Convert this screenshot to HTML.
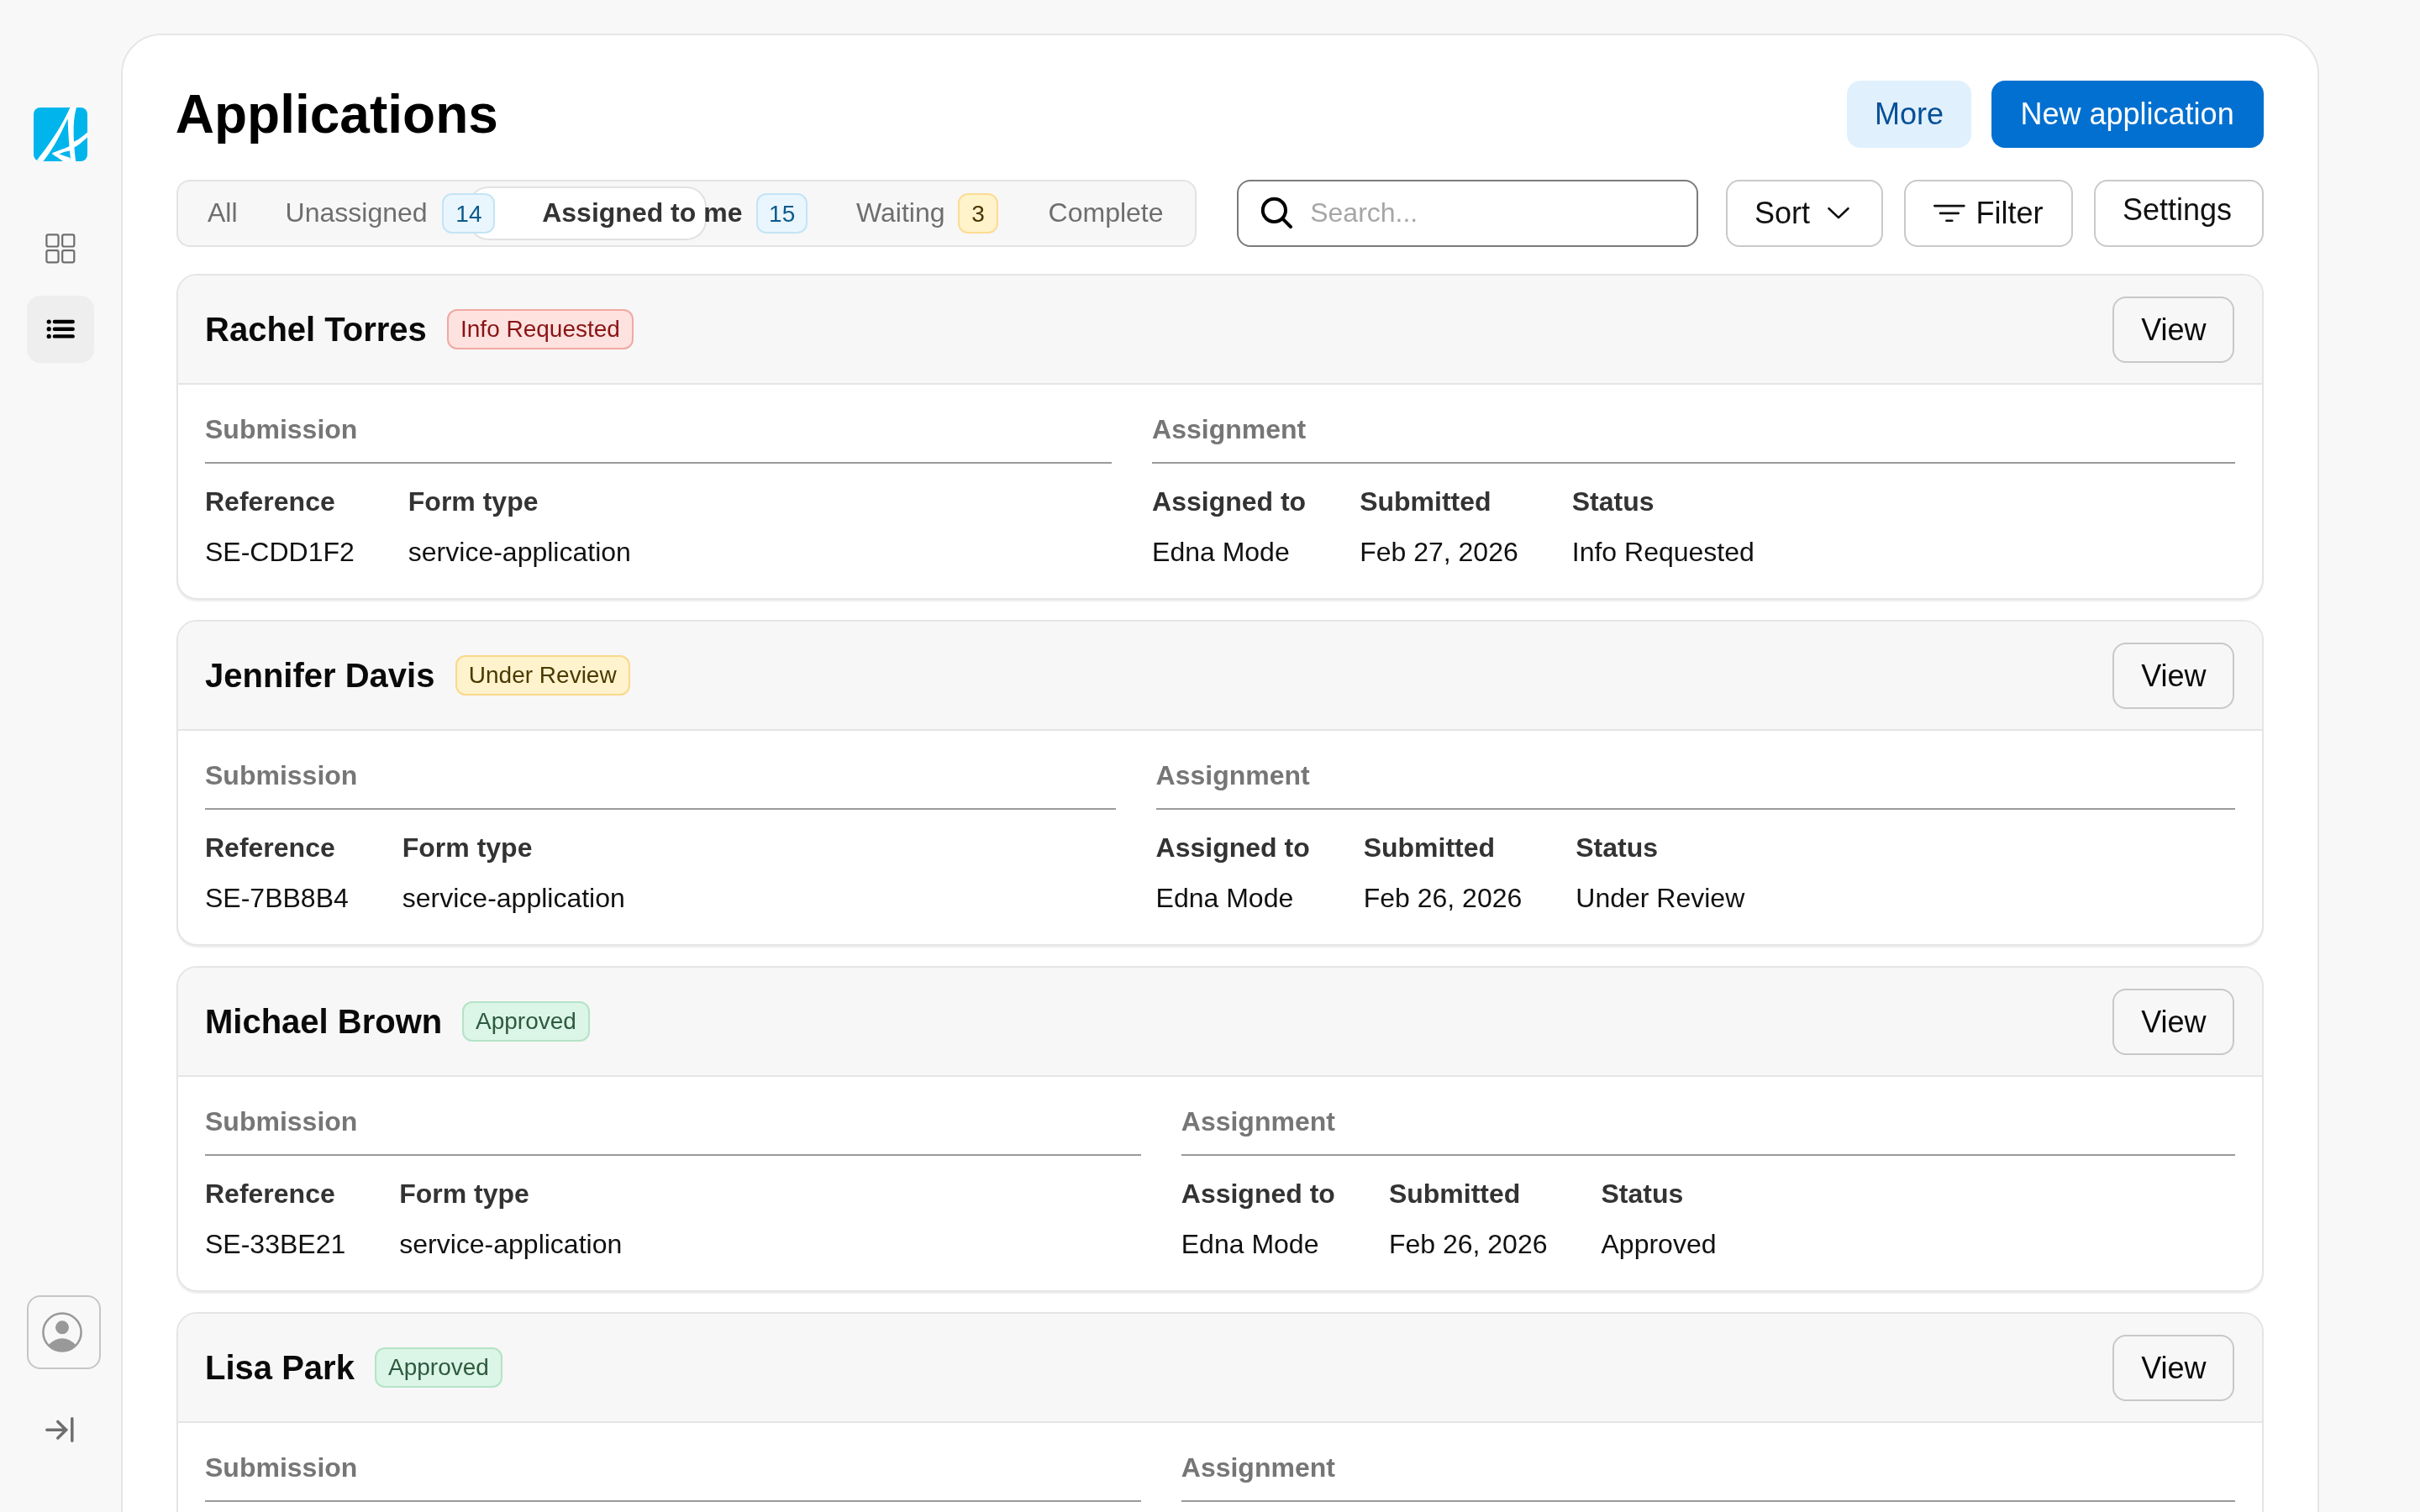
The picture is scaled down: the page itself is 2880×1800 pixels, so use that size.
<!DOCTYPE html>
<html><head><meta charset="utf-8">
<style>
html,body{margin:0;padding:0;}
body{width:2880px;height:1800px;overflow:hidden;background:#f8f8f8;font-family:"Liberation Sans",sans-serif;}
#z{zoom:2;will-change:transform;width:1440px;height:900px;position:relative;overflow:hidden;background:#f8f8f8;}
.a{position:absolute;white-space:nowrap;}
.panel{position:absolute;left:72px;top:20px;width:1308px;height:1200px;box-sizing:border-box;border:1px solid #e6e6e6;border-radius:24px;background:#fff;}
.title{left:104.4px;top:48px;font-size:32px;line-height:40px;font-weight:bold;color:#000;}
.btn{position:absolute;box-sizing:border-box;border-radius:8px;text-align:center;white-space:nowrap;font-size:18px;}
.more{left:1099px;top:48px;width:74px;height:40px;line-height:40px;background:#e0f0fd;color:#054f96;}
.new{left:1184.8px;top:48px;width:162px;height:40px;line-height:40px;background:#0270d0;color:#fff;}
.tabs{position:absolute;left:105px;top:107px;width:607px;height:39.75px;box-sizing:border-box;border:1px solid #e3e3e3;border-radius:8px;background:#f7f7f7;}
.pill{position:absolute;left:278.4px;top:110.95px;width:142.2px;height:31.85px;box-sizing:border-box;border:1px solid #e2e2e2;border-radius:12px;background:#fff;}
.tab{position:absolute;top:116.6px;font-size:16px;line-height:20px;color:#6e6e6e;}
.tab.act{color:#333;font-weight:bold;}
.bdg{position:absolute;top:115.1px;height:23.75px;box-sizing:border-box;border:1px solid #c4e4f5;background:#eaf6fd;color:#0b5a8c;border-radius:6px;font-size:14px;line-height:22.5px;text-align:center;}
.bdg.y{border-color:#fcdc94;background:#fef3cb;color:#4a3500;}
.search{position:absolute;left:735.8px;top:107.1px;width:274.9px;height:39.7px;box-sizing:border-box;border:1px solid #7a7a7a;border-radius:8px;background:#fff;}
.ob{position:absolute;top:107.1px;height:39.9px;box-sizing:border-box;border:1px solid #c9c9c9;border-radius:8px;background:#fff;}
.card{position:absolute;left:105px;width:1242px;height:194px;box-sizing:border-box;border:1px solid #e5e5e5;border-radius:12px;background:#fff;box-shadow:0 1px 1px rgba(0,0,0,0.07);overflow:hidden;}
.ch{position:absolute;left:0;top:0;right:0;height:65px;box-sizing:border-box;border-bottom:1px solid #e5e5e5;background:#f7f7f7;}
.name{position:absolute;left:16px;top:22.2px;font-size:20px;line-height:20px;font-weight:bold;color:#0a0a0a;white-space:nowrap;}
.cb{position:absolute;top:20px;height:24px;box-sizing:border-box;border:1px solid;border-radius:6px;font-size:14px;line-height:22px;padding:0 7px;white-space:nowrap;}
.red{background:#fde2e0;border-color:#f0a9a2;color:#8a1414;}
.yel{background:#fef3cc;border-color:#fad88c;color:#4a3a00;}
.grn{background:#dbf5e6;border-color:#b5e3c7;color:#2d5a3e;}
.view{position:absolute;left:1151.2px;top:12.25px;width:72.5px;height:39.5px;box-sizing:border-box;border:1px solid #c8c8c8;border-radius:8px;font-size:18px;line-height:37.5px;text-align:center;color:#0a0a0a;}
.body{position:absolute;left:16px;top:65px;width:1208px;display:flex;gap:24px;}
.sec{flex:1 1 auto;}
.st{font-size:16px;line-height:20px;font-weight:bold;color:#767676;margin-top:16.5px;height:20px;}
.dv{margin-top:9.3px;border-top:1px solid #9a9a9a;height:0;}
.cols{display:flex;gap:32px;margin-top:12.8px;}
.lb{font-size:16px;line-height:20px;font-weight:bold;color:#333;white-space:nowrap;}
.vl{font-size:16px;line-height:20px;color:#111;white-space:nowrap;margin-top:9.7px;}
</style></head>
<body><div id="z">
<!-- sidebar -->
<svg class="a" style="left:20px;top:64px" width="32" height="32" viewBox="0 0 64 64">
<defs><clipPath id="lc"><rect x="0" y="0" width="64" height="64" rx="8"/></clipPath></defs>
<rect x="0" y="0" width="64" height="64" rx="8" fill="#00b5ec"/>
<g clip-path="url(#lc)" fill="#fff">
<path d="M3,64 C12,52 30,30 43.4,0 L51,0 C47,14 46.5,32 50.2,64 L44.2,64 C42.5,48 41,30 40.6,13.2 C33,30 24,48 11.4,64 Z"/>
<path d="M64,29.5 C58,35 52,39 47.8,40.8 L41.8,46.4 C35,49.5 28,51.5 21.8,54.3 C23,57 30,60 35,64 L44,64 L43.5,60 C38,58 34,56.5 30.2,55.5 C34,53.5 38,52.5 42.2,51.8 L48.2,47.6 C53,45 58,41 64,35.5 Z"/>
</g></svg>
<svg class="a" style="left:27px;top:139px" width="18" height="18" viewBox="0 0 18 18" fill="none" stroke="#6e6e6e" stroke-width="1.1">
<rect x="0.7" y="0.7" width="7.05" height="7.05" rx="1"/><rect x="10.1" y="0.7" width="7.05" height="7.05" rx="1"/>
<rect x="0.7" y="10.1" width="7.05" height="7.05" rx="1"/><rect x="10.1" y="10.1" width="7.05" height="7.05" rx="1"/>
</svg>
<div class="a" style="left:16px;top:176px;width:40px;height:40px;border-radius:8px;background:#efeeef"></div>
<svg class="a" style="left:27px;top:187px" width="18" height="18" viewBox="0 0 18 18" fill="#000" stroke="#000" stroke-linecap="round">
<circle cx="2.1" cy="4.5" r="1.3" stroke="none"/><circle cx="2.1" cy="8.85" r="1.3" stroke="none"/><circle cx="2.1" cy="13.2" r="1.3" stroke="none"/>
<path d="M5.45,4.5H16.35M5.45,8.85H16.35M5.45,13.2H16.35" stroke-width="2.2" fill="none"/>
</svg>
<div class="a" style="left:16px;top:771px;width:44px;height:44px;box-sizing:border-box;border:1px solid #c6c6c6;border-radius:8px;"></div>
<svg class="a" style="left:23px;top:779px" width="28" height="28" viewBox="0 0 28 28">
<defs><clipPath id="uc"><circle cx="14" cy="14" r="11.5"/></clipPath></defs>
<circle cx="14" cy="14" r="11.3" fill="none" stroke="#999" stroke-width="1.25"/>
<circle cx="14" cy="11.15" r="4" fill="#999"/>
<g clip-path="url(#uc)"><ellipse cx="14" cy="30.25" rx="11" ry="12.65" fill="#999"/></g>
</svg>
<svg class="a" style="left:26px;top:842px" width="20" height="18" viewBox="0 0 20 18" fill="none" stroke="#6e6e6e" stroke-width="1.75" stroke-linecap="round" stroke-linejoin="round">
<path d="M1.9,9.1H13.5M8.4,4.2L13.3,9.1L8.4,14M16.9,2.4V15.6"/>
</svg>

<div class="panel"></div>
<div class="a title">Applications</div>
<div class="btn more">More</div>
<div class="btn new">New application</div>

<div class="tabs"></div>
<div class="pill"></div>
<div class="tab" style="left:123.5px">All</div>
<div class="tab" style="left:169.8px">Unassigned</div>
<div class="bdg" style="left:263.2px;width:31.5px">14</div>
<div class="tab act" style="left:322.6px">Assigned to me</div>
<div class="bdg" style="left:450.1px;width:30.5px">15</div>
<div class="tab" style="left:509.5px">Waiting</div>
<div class="bdg y" style="left:570px;width:24px">3</div>
<div class="tab" style="left:623.8px">Complete</div>

<div class="search"></div>
<svg class="a" style="left:750px;top:117px" width="20" height="20" viewBox="0 0 20 20" fill="none" stroke="#000" stroke-width="2" stroke-linecap="round">
<circle cx="8.2" cy="8.2" r="6.8"/><path d="M13.2,13.2L18,18"/>
</svg>
<div class="a" style="left:779.6px;top:116.7px;font-size:16px;line-height:20px;color:#a6a6a6">Search...</div>

<div class="ob" style="left:1027.2px;width:93.4px"></div>
<div class="a" style="left:1044px;top:117px;font-size:18px;line-height:20px;color:#111">Sort</div>
<svg class="a" style="left:1084px;top:122px" width="18" height="10" viewBox="0 0 18 10" fill="none" stroke="#111" stroke-width="1.3" stroke-linecap="round" stroke-linejoin="round">
<path d="M4.25,2.1L10,7.55L15.7,2.1"/>
</svg>
<div class="ob" style="left:1133.2px;width:100.3px"></div>
<svg class="a" style="left:1150px;top:120px" width="20" height="14" viewBox="0 0 20 14" fill="none" stroke="#111" stroke-width="1.3" stroke-linecap="round">
<path d="M1.15,2.55H18.7M4.5,6.95H15.35M8.2,11.4H11.65"/>
</svg>
<div class="a" style="left:1175.8px;top:116.9px;font-size:18px;line-height:20px;color:#111">Filter</div>
<div class="ob" style="left:1245.8px;width:101.1px"></div>
<div class="a" style="left:1263px;top:115px;font-size:18px;line-height:20px;color:#111">Settings</div>

<!-- cards -->
<div class="card" style="top:163px">
 <div class="ch"><div class="name">Rachel Torres</div><div class="cb red" style="left:160px">Info Requested</div><div class="view">View</div></div>
 <div class="body">
  <div class="sec"><div class="st">Submission</div><div class="dv"></div>
   <div class="cols"><div><div class="lb">Reference</div><div class="vl">SE-CDD1F2</div></div><div><div class="lb">Form type</div><div class="vl">service-application</div></div></div></div>
  <div class="sec"><div class="st">Assignment</div><div class="dv"></div>
   <div class="cols"><div><div class="lb">Assigned to</div><div class="vl">Edna Mode</div></div><div><div class="lb">Submitted</div><div class="vl">Feb 27, 2026</div></div><div><div class="lb">Status</div><div class="vl">Info Requested</div></div></div></div>
 </div>
</div>
<div class="card" style="top:369px">
 <div class="ch"><div class="name">Jennifer Davis</div><div class="cb yel" style="left:164.9px">Under Review</div><div class="view">View</div></div>
 <div class="body">
  <div class="sec"><div class="st">Submission</div><div class="dv"></div>
   <div class="cols"><div><div class="lb">Reference</div><div class="vl">SE-7BB8B4</div></div><div><div class="lb">Form type</div><div class="vl">service-application</div></div></div></div>
  <div class="sec"><div class="st">Assignment</div><div class="dv"></div>
   <div class="cols"><div><div class="lb">Assigned to</div><div class="vl">Edna Mode</div></div><div><div class="lb">Submitted</div><div class="vl">Feb 26, 2026</div></div><div><div class="lb">Status</div><div class="vl">Under Review</div></div></div></div>
 </div>
</div>
<div class="card" style="top:575px">
 <div class="ch"><div class="name">Michael Brown</div><div class="cb grn" style="left:169px">Approved</div><div class="view">View</div></div>
 <div class="body">
  <div class="sec"><div class="st">Submission</div><div class="dv"></div>
   <div class="cols"><div><div class="lb">Reference</div><div class="vl">SE-33BE21</div></div><div><div class="lb">Form type</div><div class="vl">service-application</div></div></div></div>
  <div class="sec"><div class="st">Assignment</div><div class="dv"></div>
   <div class="cols"><div><div class="lb">Assigned to</div><div class="vl">Edna Mode</div></div><div><div class="lb">Submitted</div><div class="vl">Feb 26, 2026</div></div><div><div class="lb">Status</div><div class="vl">Approved</div></div></div></div>
 </div>
</div>
<div class="card" style="top:781px">
 <div class="ch"><div class="name">Lisa Park</div><div class="cb grn" style="left:117px">Approved</div><div class="view">View</div></div>
 <div class="body">
  <div class="sec"><div class="st">Submission</div><div class="dv"></div>
   <div class="cols"><div><div class="lb">Reference</div><div class="vl">SE-3B3E21</div></div><div><div class="lb">Form type</div><div class="vl">service-application</div></div></div></div>
  <div class="sec"><div class="st">Assignment</div><div class="dv"></div>
   <div class="cols"><div><div class="lb">Assigned to</div><div class="vl">Edna Mode</div></div><div><div class="lb">Submitted</div><div class="vl">Feb 26, 2026</div></div><div><div class="lb">Status</div><div class="vl">Approved</div></div></div></div>
 </div>
</div>
</div></body></html>
